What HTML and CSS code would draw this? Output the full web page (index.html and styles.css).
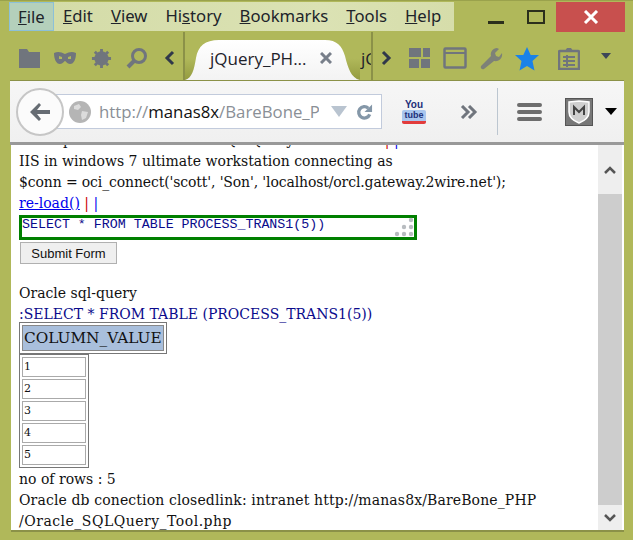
FILE: index.html
```html
<!DOCTYPE html>
<html lang="en">
<head>
<meta charset="utf-8">
<title>jQuery_PHP</title>
<link rel="stylesheet" href="styles.css">
</head>
<body>
<div class="window">
  <header class="titlebar">
    <nav class="menubar">
      <span class="menu active"><u>F</u>ile</span>
      <span class="menu"><u>E</u>dit</span>
      <span class="menu"><u>V</u>iew</span>
      <span class="menu">Hi<u>s</u>tory</span>
      <span class="menu"><u>B</u>ookmarks</span>
      <span class="menu"><u>T</u>ools</span>
      <span class="menu"><u>H</u>elp</span>
    </nav>
    <div class="wincontrols">
      <svg class="winbtn" width="16" height="4" viewBox="0 0 16 4"><rect width="16" height="3" y="1" fill="#2b2f1c"/></svg>
      <svg class="winbtn max" width="18" height="14" viewBox="0 0 18 14"><rect x="1" y="1" width="16" height="12" fill="none" stroke="#2b2f1c" stroke-width="2"/></svg>
      <div class="close"><svg width="16" height="14" viewBox="0 0 16 14"><path d="M2 1l12 12M14 1L2 13" stroke="#fff" stroke-width="3"/></svg></div>
    </div>
  </header>
  <div class="tabstrip">
    <div class="tabicons left">
      <svg class="ic-folder" width="23" height="22" viewBox="0 0 23 22"><path d="M1 2h8l2 3h11v16H1z" fill="#70757d"/></svg>
      <svg width="24" height="14" viewBox="0 0 24 14"><path d="M1 2c4-2 7-1 11 1 4-2 7-3 11-1 0 6-2 11-6 11-3 0-4-3-5-3s-2 3-5 3C3 13 1 8 1 2zM6 5v3h3V6zm12 0l-3 1v2h3z" fill="#70757d" fill-rule="evenodd"/></svg>
      <svg width="21" height="21" viewBox="0 0 22 22"><circle cx="11" cy="11" r="5.500" fill="none" stroke="#70757d" stroke-width="4"/><path d="M11 1v20M1 11h20M4 4l14 14M18 4L4 18" stroke="#70757d" stroke-width="3"/></svg>
      <svg width="22" height="22" viewBox="0 0 22 22"><circle cx="13" cy="9" r="6.500" fill="none" stroke="#70757d" stroke-width="3"/><path d="M8 14l-6 6" stroke="#70757d" stroke-width="4"/></svg>
      <svg class="ic-prev" width="11" height="16" viewBox="0 0 11 16"><path d="M9 2L3 8l6 6" fill="none" stroke="#30384a" stroke-width="3"/></svg>
    </div>
    <div class="tabwrap">
      <div class="tab">
        <span class="tabtitle">jQuery_PH...</span>
        <svg width="12" height="12" viewBox="0 0 12 12"><path d="M1 1l10 10M11 1L1 11" stroke="#787f8a" stroke-width="3"/></svg>
      </div>
    </div>
    <div class="tabnext"><span>jC</span></div>
    <div class="tabicons right">
      <svg width="11" height="16" viewBox="0 0 11 16"><path d="M2 2l6 6-6 6" fill="none" stroke="#30384a" stroke-width="3"/></svg>
      <svg class="ic-grid" width="22" height="22" viewBox="0 0 22 22"><path d="M0 1h12v9H0zM14 1h7v9h-7zM0 12h10v9H0zM12 12h9v9h-9z" fill="#70757d"/></svg>
      <svg width="24" height="22" viewBox="0 0 24 22"><rect x="1.500" y="1.500" width="21" height="19" rx="1" fill="none" stroke="#70757d" stroke-width="2.500"/><path d="M2 6h20" stroke="#70757d" stroke-width="2"/></svg>
      <svg width="24" height="24" viewBox="0 0 24 24"><path d="M2 20l10-10c-1-4 2-8 6-8l2 1-4 4 1 3 3 1 3-4c1 5-3 9-8 8L5 23c-2 1-4-1-3-3z" fill="#7d8178"/></svg>
      <svg class="ic-star" width="26" height="25" viewBox="0 0 26 25"><path d="M13 1l3.700 8H25l-6.500 6 2 9.500L13 20l-7.500 4.500 2-9.500L1 9h8.300z" fill="#1a82e8"/></svg>
      <svg class="ic-clip" width="22" height="23" viewBox="0 0 22 23"><path d="M2 4h18a1 1 0 011 1v17H1V5a1 1 0 011-1z" fill="none" stroke="#70757d" stroke-width="2.500"/><path d="M7 4l2-3h4l2 3z" fill="#70757d"/><path d="M5 10h12M5 14h12M5 18h12M9 8v12" stroke="#70757d" stroke-width="2"/></svg>
      <svg class="ic-drop" width="10" height="6" viewBox="0 0 10 6"><path d="M0 0h10L5 6z" fill="#3d4658"/></svg>
    </div>
  </div>
  <div class="navbar">
    <div class="backbtn"><svg width="22" height="20" viewBox="0 0 22 20"><path d="M10 1L1 10l9 9 2-2-4-5h13V8H8l4-5z" fill="#666c73"/></svg></div>
    <div class="urlbar">
      <svg class="globe" width="22" height="22" viewBox="0 0 22 22"><circle cx="11" cy="11" r="11" fill="#b5b5b5"/><path d="M5 5l5-2 2 3-3 3-4-1zM13 10l6 1-2 6-4 2-1-5z" fill="#dcdcdc"/></svg>
      <span class="url">http://<b>manas8x</b>/BareBone_P</span>
      <svg class="urldrop" width="16" height="11" viewBox="0 0 16 11"><path d="M0 0h16L8 11z" fill="#b9c4d0"/></svg>
      <svg class="reload" width="17" height="18" viewBox="0 0 18 18"><path d="M14.500 11.500A6 6 0 1 1 13 5" fill="none" stroke="#8497a8" stroke-width="3.500"/><path d="M17 1v8H9z" fill="#8497a8"/></svg>
    </div>
    <div class="navicons">
      <div class="ytlogo"><span class="ytyou">You</span><span class="yttube">tube</span></div>
      <svg class="chev" width="18" height="14" viewBox="0 0 18 14"><path d="M2 1l6 6-6 6M9 1l6 6-6 6" fill="none" stroke="#70757d" stroke-width="3"/></svg>
    </div>
    <div class="navright">
      <svg width="25" height="20" viewBox="0 0 25 20"><path d="M2 3h21M2 10h21M2 17h21" stroke="#6d6d6d" stroke-width="4" stroke-linecap="round"/></svg>
      <div class="shield"><svg width="22" height="24" viewBox="0 0 22 24"><path d="M1 2l10-1 10 1v10c0 6-5 9-10 11C6 21 1 18 1 12z" fill="#cfcfcf" stroke="#fff" stroke-width="1.500"/><path d="M6 15V7l5 5 5-5v8" fill="none" stroke="#444" stroke-width="2"/></svg></div>
      <svg width="12" height="7" viewBox="0 0 12 7"><path d="M0 0h12L6 7z" fill="#000"/></svg>
    </div>
  </div>
  <div class="viewport">
    <main class="page">
      <div class="cutline">Some part of all the Oracle SQL Query tool in html <span class="red">|</span> <span class="blue">|</span></div>
      <div>IIS in windows 7 ultimate workstation connecting as</div>
      <div class="tight">$conn = oci_connect('scott', 'Son', 'localhost/orcl.gateway.2wire.net');</div>
      <div><a href="#">re-load()</a> <span class="red">|</span> <span class="blue">|</span></div>
      <div class="sqlbox">SELECT * FROM TABLE PROCESS_TRANS1(5))<svg class="grip" width="20" height="20" viewBox="0 0 20 20"><g fill="#b8bcc0"><circle cx="17" cy="3" r="2.200"/><circle cx="10" cy="10" r="2.200"/><circle cx="17" cy="10" r="2.200"/><circle cx="3" cy="17" r="2.200"/><circle cx="10" cy="17" r="2.200"/><circle cx="17" cy="17" r="2.200"/></g></svg></div>
      <button class="submit" type="button">Submit Form</button>
      <div class="gap">Oracle sql-query</div>
      <div class="query">:SELECT * FROM TABLE (PROCESS_TRANS1(5))</div>
      <table class="tbl head"><tr><th>COLUMN_VALUE</th></tr></table>
      <table class="tbl rows">
        <tr><td>1</td></tr>
        <tr><td>2</td></tr>
        <tr><td>3</td></tr>
        <tr><td>4</td></tr>
        <tr><td>5</td></tr>
      </table>
      <div class="count">no of rows : 5</div>
      <div class="wide">Oracle db conection closedlink: intranet http://manas8x/BareBone_PHP</div>
      <div class="wider">/Oracle_SQLQuery_Tool.php</div>
    </main>
    <aside class="scrollbar">
      <div class="sbbtn"><svg width="12" height="8" viewBox="0 0 12 8"><path d="M1 7l5-5 5 5" fill="none" stroke="#555" stroke-width="2.500"/></svg></div>
      <div class="sbthumb"></div>
      <div class="sbbtn"><svg width="12" height="8" viewBox="0 0 12 8"><path d="M1 1l5 5 5-5" fill="none" stroke="#555" stroke-width="2.500"/></svg></div>
    </aside>
  </div>
</div>
</body>
</html>
```
FILE: styles.css
```css
* { box-sizing: border-box; }
html, body { margin: 0; padding: 0; }
body { width: 633px; height: 540px; overflow: hidden; background: #b0b85a; font-family: "Open Sans", "Noto Sans", sans-serif; }
.window { width: 633px; height: 540px; display: flex; flex-direction: column; background: #b0b85a; padding: 0 9px 8px 10px; border-top: 1px solid #9aa24c; }
.titlebar { height: 31px; display: flex; justify-content: space-between; margin: 0 -1px 0 -1px; padding-top: 1px; flex: none; }
.menubar { width: 445px; height: 29px; display: flex; align-items: center; background: linear-gradient(90deg, #d3dba6, #dbe2b4 70%, #d6ddaa); font-family: "Noto Sans", sans-serif; font-size: 16.700px; color: #20242a; }
.menu { height: 29px; line-height: 28px; padding: 0 9px; white-space: nowrap; }
.menu.active { background: #b4d0bb; border: 1px solid #8cc0d8; padding: 0 8px; width: 45px; }
.wincontrols { display: flex; align-items: flex-start; justify-content: flex-end; width: 164px; }
.winbtn { margin: 18px 0 0 0; }
.winbtn.max { margin: 8px 0 0 23px; }
.close { width: 69px; height: 30px; margin-left: 11px; background: #c8504e; display: flex; align-items: center; justify-content: center; }
.tabstrip { height: 48px; display: flex; align-items: stretch; margin: 0 -9px 0 -10px; padding-left: 18px; flex: none; }
.tabicons { display: flex; align-items: center; gap: 14px; padding-top: 4px; }
.tabicons.left { width: 167px; border-right: 2px solid #8b9148; }
.ic-folder { margin-right: -2px; }
.ic-prev { margin-left: 2px; }
.tabicons.right { flex: 1; gap: 12px; padding-left: 8px; }
.ic-grid { margin-left: 5px; }
.ic-star { margin-left: -1px; }
.ic-clip { margin-left: 6px; }
.ic-drop { margin-left: 9px; margin-top: -4px; }
.tabwrap { width: 175px; flex: none; padding-top: 8px; background: linear-gradient(#b0b85a 55%, #949b40); }
.tab { width: 175px; height: 40px; background: linear-gradient(#ffffff, #f3f3f3); clip-path: path("M0 40C7 38 9 30 11 18C13 6 20 0 34 0H140C152 0 157 6 160 16C163 28 166 38 175 40Z"); display: flex; align-items: center; padding: 0 0 4px 25px; gap: 13px; font-size: 17px; color: #1e222a; white-space: nowrap; }
.tabnext { width: 13px; flex: none; overflow: hidden; border-right: 2px solid #8b9148; display: flex; align-items: center; font-size: 17px; color: #1e222a; white-space: nowrap; padding: 4px 0 0 1px; }
.navbar { height: 65px; flex: none; display: flex; align-items: center; background: linear-gradient(#f6f6f6, #f0f0f0); border-top: 1px solid #8b9148; border-bottom: 3px solid #999; padding-left: 6px; }
.backbtn { width: 48px; height: 48px; border-radius: 50%; background: #fbfbfb; border: 2px solid #c6c6c6; display: flex; align-items: center; justify-content: center; position: relative; z-index: 1; flex: none; }
.urlbar { width: 328px; height: 35px; margin-left: -10px; background: #fff; border: 1px solid #c2cbdc; display: flex; align-items: center; padding-left: 14px; flex: none; }
.globe { flex: none; }
.url { font-size: 16.800px; color: #8a8f96; margin-left: 8px; width: 220px; white-space: nowrap; overflow: hidden; flex: none; }
.url b { color: #111; font-weight: 400; }
.urldrop { margin-left: 12px; flex: none; }
.reload { margin-left: 9px; flex: none; }
.navicons { width: 115px; height: 100%; display: flex; align-items: center; flex: none; padding-left: 20px; gap: 34px; }
.ytlogo { width: 24px; display: flex; flex-direction: column; align-items: center; font-family: "Liberation Sans", sans-serif; font-weight: 700; line-height: 11px; }
.ytyou { font-size: 10px; color: #1d2f7a; }
.yttube { font-size: 9px; color: #1d2f7a; background: #a9c6ee; border-bottom: 3px solid #e23c3c; width: 24px; text-align: center; border-radius: 2px; }
.navright { flex: 1; height: 47px; border-left: 1px solid #bcc6d0; display: flex; align-items: center; padding-left: 19px; }
.shield { width: 28px; height: 28px; background: #777; border: 1px solid #555; margin-left: 23px; display: flex; align-items: center; justify-content: center; flex: none; margin-right: 12px; }
.viewport { flex: 1; min-height: 0; display: flex; background: #fff; margin-left: 1px; overflow: hidden; border-bottom: 2px solid #8b9148; }
.page { flex: 1; min-width: 0; overflow: hidden; padding-left: 8px; font-family: "DejaVu Serif", serif; font-size: 14px; line-height: 21px; color: #111; white-space: nowrap; }
.cutline { margin-top: -15px; }
.tight { letter-spacing: -0.130px; }
.wide { letter-spacing: 0.130px; }
.wider { letter-spacing: 0.500px; }
.count { margin-top: 1px; }
a { color: #0000ee; }
.red { color: #c00; }
.blue { color: #0000ee; }
.query { color: #0a0a8c; }
.sqlbox { width: 398px; height: 25px; border: 3px solid #008000; margin-top: 1px; padding: 0; font-family: "Liberation Mono", monospace; font-size: 13.300px; line-height: 13px; color: #0a0a8c; position: relative; }
.grip { position: absolute; right: 0; bottom: 0; }
.submit { display: block; width: 97px; height: 22px; margin: 2px 0 0 1px; padding: 0; background: #efefef; border: 1px solid #b0b0b0; font-family: "Liberation Sans", sans-serif; font-size: 13px; color: #111; }
.gap { margin-top: 19px; }
.tbl { border-collapse: separate; border-spacing: 2px; border: 1px solid #777; }
.tbl.head { margin-top: -3px; }
.tbl th { font-weight: 400; background: #a9bfdc; border: 1px solid #888; padding: 0 1px; font-size: 15.300px; line-height: 24px; }
.tbl td { width: 64px; height: 20px; border: 1px solid #aaa; padding: 0 1px; font-size: 11px; line-height: 18px; }
.scrollbar { width: 24px; flex: none; display: flex; flex-direction: column; margin-right: 2px; background: #eee; }
.sbbtn { height: 49px; display: flex; align-items: center; justify-content: center; }
.sbbtn:last-child { height: 25px; }
.sbthumb { flex: 1; background: #cdcdcd; }
```
